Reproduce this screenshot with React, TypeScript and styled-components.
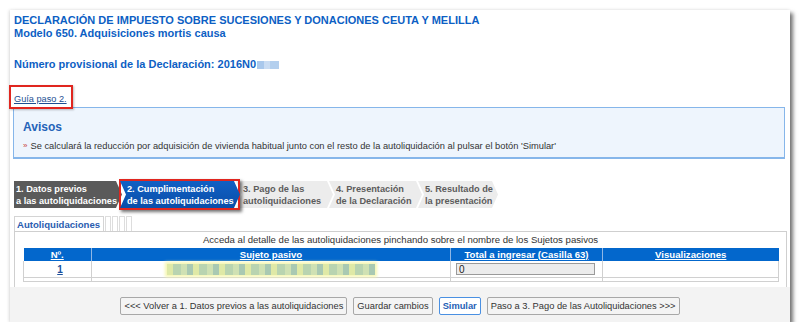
import styled, { createGlobalStyle } from "styled-components";

const GlobalStyle = createGlobalStyle`
  body {
    margin: 0;
    background: #ffffff;
    font-family: "Liberation Sans", Arial, sans-serif;
  }
`;

const steps = [
  { l1: "1. Datos previos", l2: "a las autoliquidaciones", state: "done", width: 108 },
  { l1: "2. Cumplimentación", l2: "de las autoliquidaciones", state: "active", width: 120 },
  { l1: "3. Pago de las", l2: "autoliquidaciones", state: "todo", width: 97 },
  { l1: "4. Presentación", l2: "de la Declaración", state: "todo", width: 93 },
  { l1: "5. Resultado de", l2: "la presentación", state: "todo", width: 80 },
];

export default function App() {
  return (
    <>
      <GlobalStyle />
      <Panel>
        <Content>
          <Title>
            DECLARACIÓN DE IMPUESTO SOBRE SUCESIONES Y DONACIONES CEUTA Y MELILLA
            <br />
            Modelo 650. Adquisiciones mortis causa
          </Title>
          <Numero>
            Número provisional de la Declaración: 2016N0
            <Blur />
          </Numero>
          <GuiaRow>
            <Highlight>
              <Guia href="#">Guía paso 2.</Guia>
            </Highlight>
          </GuiaRow>
          <Avisos>
            <AvisosTitle>Avisos</AvisosTitle>
            <AvisoLine>
              <Bullet>»</Bullet>
              Se calculará la reducción por adquisición de vivienda habitual junto con el resto de la
              autoliquidación al pulsar el botón 'Simular'
            </AvisoLine>
          </Avisos>

          <Steps>
            {steps.map((s, i) =>
              s.state === "active" ? (
                <ActiveFrame key={i}>
                  <Step $state={s.state} $w={s.width} $first={false}>
                    {s.l1}
                    <br />
                    {s.l2}
                  </Step>
                </ActiveFrame>
              ) : (
                <Step key={i} $state={s.state} $w={s.width} $first={i === 0}>
                  {s.l1}
                  <br />
                  {s.l2}
                </Step>
              )
            )}
          </Steps>

          <Tabs>
            <Tab>Autoliquidaciones</Tab>
            <MiniTab />
            <MiniTab />
            <MiniTab />
            <MiniTab />
          </Tabs>
          <TableBox>
            <Caption>
              Acceda al detalle de las autoliquidaciones pinchando sobre el nombre de los Sujetos
              pasivos
            </Caption>
            <Table>
              <colgroup>
                <col style={{ width: 68 }} />
                <col style={{ width: 359 }} />
                <col style={{ width: 152 }} />
                <col style={{ width: 176 }} />
              </colgroup>
              <thead>
                <tr>
                  <Th>
                    <HeadLink href="#">Nº.</HeadLink>
                  </Th>
                  <Th>
                    <HeadLink href="#">Sujeto pasivo</HeadLink>
                  </Th>
                  <Th>
                    <HeadLink href="#">Total a ingresar (Casilla 63)</HeadLink>
                  </Th>
                  <Th>
                    <HeadLink href="#">Visualizaciones</HeadLink>
                  </Th>
                </tr>
              </thead>
              <tbody>
                <tr>
                  <Td $center>
                    <RowLink href="#">1</RowLink>
                  </Td>
                  <Td $center>
                    <NameBlur />
                  </Td>
                  <Td>
                    <Amount readOnly value="0" />
                  </Td>
                  <Td />
                </tr>
                <tr>
                  <EmptyTd />
                  <EmptyTd />
                  <EmptyTd />
                  <EmptyTd />
                </tr>
              </tbody>
            </Table>
          </TableBox>
        </Content>
        <ButtonBar>
          <Button>&lt;&lt;&lt; Volver a 1. Datos previos a las autoliquidaciones</Button>
          <Button>Guardar cambios</Button>
          <Button $primary>Simular</Button>
          <Button>Paso a 3. Pago de las Autoliquidaciones &gt;&gt;&gt;</Button>
        </ButtonBar>
      </Panel>
    </>
  );
}

const Panel = styled.div`
  margin: 10px 0 0 10px;
  width: 780px;
  height: 312px;
  background: #ffffff;
  box-shadow: 3px 3px 4px rgba(0, 0, 0, 0.55), -1px 0 3px rgba(0, 0, 0, 0.12);
  display: flex;
  flex-direction: column;
`;

const Content = styled.div`
  padding: 4px 3px 0 4px;
`;

const Title = styled.div`
  color: #0d5fc4;
  font-weight: 700;
  font-size: 11px;
  line-height: 13px;
`;

const Numero = styled.div`
  margin-top: 18px;
  color: #0d5fc4;
  font-weight: 700;
  font-size: 11px;
  line-height: 13px;
  display: flex;
  align-items: center;
`;

const Blur = styled.span`
  display: inline-block;
  width: 22px;
  height: 8px;
  margin-left: 1px;
  background: linear-gradient(90deg, #a9c8ec 0 30%, #c9dcf3 30% 60%, #b3cfee 60% 100%);
`;

const GuiaRow = styled.div`
  margin-top: 14px;
  margin-left: -5px;
  height: 20px;
`;

const Highlight = styled.span`
  display: inline-block;
  border: 2px solid #e0261f;
  padding: 1px 4px 1px 3px;
  box-shadow: 1px 1px 2px rgba(0, 0, 0, 0.25);
`;

const Guia = styled.a`
  font-size: 9.2px;
  line-height: 12px;
  color: #1c4e92;
  text-decoration: underline;
`;

const Avisos = styled.div`
  margin-top: 2px;
  margin-left: -1px;
  width: 772px;
  height: 52px;
  background: #eef5fd;
  border: 1px solid #86b6ea;
  border-bottom-width: 2px;
  padding: 12px 0 0 9px;
  box-sizing: border-box;
`;

const AvisosTitle = styled.div`
  color: #2563b8;
  font-weight: 700;
  font-size: 12px;
  line-height: 14px;
`;

const AvisoLine = styled.div`
  margin-top: 6px;
  color: #333333;
  font-size: 9.3px;
  line-height: 12px;
  display: flex;
  align-items: center;
`;

const Bullet = styled.span`
  color: #c8403a;
  font-size: 8px;
  margin-right: 3px;
`;

const Steps = styled.div`
  margin-top: 21px;
  display: flex;
  align-items: center;
  height: 29px;
`;

const Step = styled.div<{ $state: string; $w: number; $first: boolean }>`
  width: ${(p) => p.$w}px;
  height: 27px;
  box-sizing: border-box;
  margin-left: ${(p) => (p.$first ? "0" : "-4px")};
  padding: 2px 0 0 ${(p) => (p.$first ? "2px" : "7px")};
  font-size: 9.2px;
  line-height: 12px;
  font-weight: 700;
  white-space: nowrap;
  color: ${(p) => (p.$state === "todo" ? "#5c5c5c" : "#ffffff")};
  background: ${(p) =>
    p.$state === "done"
      ? "#5a5a5a"
      : p.$state === "active"
      ? "linear-gradient(#1160c4, #0a4ea9)"
      : "#ececec"};
  clip-path: ${(p) =>
    p.$first
      ? "polygon(0 0, calc(100% - 6px) 0, 100% 50%, calc(100% - 6px) 100%, 0 100%)"
      : "polygon(0 0, calc(100% - 6px) 0, 100% 50%, calc(100% - 6px) 100%, 0 100%, 6px 50%)"};
`;

const ActiveFrame = styled.div`
  margin-left: -3px;
  border: 2px solid #e0261f;
  box-shadow: 2px 2px 3px rgba(0, 0, 0, 0.55);
  height: 27px;
  display: flex;
  z-index: 1;

  & > div {
    margin-left: -1px;
    margin-right: -2px;
  }
`;

const Tabs = styled.div`
  margin-top: 6px;
  display: flex;
  align-items: flex-end;
  height: 16px;
`;

const Tab = styled.div`
  height: 15px;
  box-sizing: border-box;
  border: 1px solid #d4d4d4;
  border-bottom: none;
  padding: 1px 3px 0 2px;
  color: #2a5db0;
  font-weight: 700;
  font-size: 9.6px;
  line-height: 13px;
`;

const MiniTab = styled.div`
  width: 6px;
  height: 15px;
  margin-left: 1px;
  border: 1px solid #dddddd;
  border-bottom: none;
  box-sizing: border-box;

  &:first-of-type {
    margin-left: 4px;
  }
`;

const TableBox = styled.div`
  width: 773px;
  height: 56px;
  box-sizing: border-box;
  border: 1px solid #cfcfcf;
  border-bottom: none;
  padding: 2px 8px 0 8px;
`;

const Caption = styled.div`
  text-align: center;
  font-size: 9.6px;
  line-height: 12px;
  color: #333333;
  margin-bottom: 2px;
`;

const Table = styled.table`
  width: 755px;
  border-collapse: collapse;
  table-layout: fixed;
`;

const Th = styled.th`
  background: #0367cc;
  height: 13px;
  padding: 0;
  border-left: 1px solid #8fb7e6;
  font-size: 9.6px;
  line-height: 12px;
  text-align: center;

  &:first-child {
    border-left: none;
  }
`;

const HeadLink = styled.a`
  color: #ffffff;
  font-weight: 700;
  text-decoration: underline;
`;

const Td = styled.td<{ $center?: boolean }>`
  height: 16px;
  padding: 0 0 0 5px;
  border: 1px solid #d0d0d0;
  border-top: none;
  text-align: ${(p) => (p.$center ? "center" : "left")};
  font-size: 10px;
  vertical-align: middle;
`;

const EmptyTd = styled.td`
  height: 3px;
  padding: 0;
  border: 1px solid #d0d0d0;
  border-top: none;
`;

const RowLink = styled.a`
  color: #1a4f9c;
  font-weight: 700;
  text-decoration: underline;
`;

const NameBlur = styled.div`
  margin: 0 auto 0 70px;
  width: 208px;
  height: 11px;
  background: repeating-linear-gradient(
    90deg,
    #dfe9a6 0 6px,
    #b9d4b0 6px 14px,
    #cfe1b3 14px 20px,
    #a9c9b2 20px 26px
  );
  box-shadow: 0 0 3px 2px #f6f7b0;
  filter: blur(0.6px);
`;

const Amount = styled.input`
  display: block;
  width: 139px;
  height: 12px;
  box-sizing: border-box;
  border: 1px solid #9a9a9a;
  background: #ececec;
  font-family: "Liberation Sans", Arial, sans-serif;
  font-size: 10px;
  color: #222222;
  padding: 0 2px;
  outline: none;
`;

const ButtonBar = styled.div`
  flex: 1;
  background: #f3f3f3;
  display: flex;
  justify-content: center;
  align-items: flex-start;
  gap: 6px;
  padding-top: 10px;
  box-sizing: border-box;
`;

const Button = styled.button<{ $primary?: boolean }>`
  height: 18px;
  padding: 0 3px;
  font-family: "Liberation Sans", Arial, sans-serif;
  font-size: 9.3px;
  font-weight: ${(p) => (p.$primary ? 700 : 400)};
  color: ${(p) => (p.$primary ? "#1f5fb6" : "#333333")};
  background: ${(p) => (p.$primary ? "#ffffff" : "#f4f4f4")};
  border: 1px solid ${(p) => (p.$primary ? "#4a90e2" : "#a8a8a8")};
  border-radius: 2px;
`;
